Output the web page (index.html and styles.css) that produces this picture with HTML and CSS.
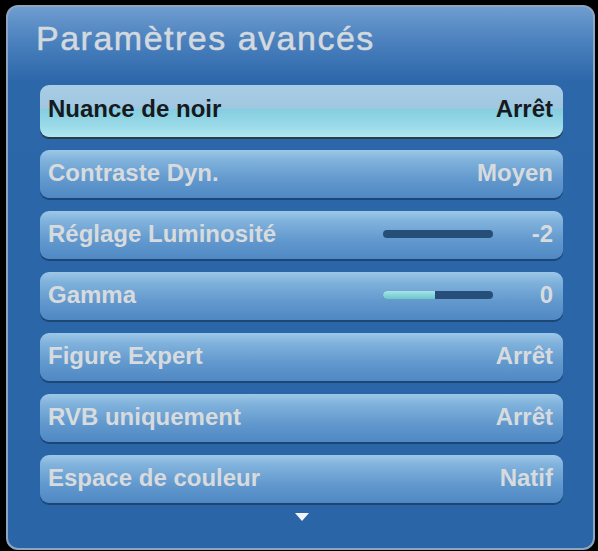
FILE: index.html
```html
<!DOCTYPE html>
<html lang="fr">
<head>
    <meta charset="UTF-8">
    <meta name="viewport" content="width=device-width, initial-scale=1.0">
    <title>Paramètres avancés</title>
    <link rel="stylesheet" href="styles.css">
</head>
<body>
    <div class="panel">
        <h1 class="title">Paramètres avancés</h1>

        <!-- Menu rows -->
        <ul class="menu">
            <li class="item selected">
                <span class="label">Nuance de noir</span>
                <span class="value">Arrêt</span>
            </li>
            <li class="item">
                <span class="label">Contraste Dyn.</span>
                <span class="value">Moyen</span>
            </li>
            <li class="item">
                <span class="label">Réglage Luminosité</span>
                <span class="slider"><span class="fill" style="width: 0%"></span></span>
                <span class="value">-2</span>
            </li>
            <li class="item">
                <span class="label">Gamma</span>
                <span class="slider"><span class="fill" style="width: 47%"></span></span>
                <span class="value">0</span>
            </li>
            <li class="item">
                <span class="label">Figure Expert</span>
                <span class="value">Arrêt</span>
            </li>
            <li class="item">
                <span class="label">RVB uniquement</span>
                <span class="value">Arrêt</span>
            </li>
            <li class="item">
                <span class="label">Espace de couleur</span>
                <span class="value">Natif</span>
            </li>
        </ul>

        <!-- More items below -->
        <div class="more">
            <svg width="14" height="8" viewBox="0 0 14 8"><polygon points="0,0 14,0 7,8" fill="#f2f6fa"/></svg>
        </div>
    </div>
</body>
</html>
```

FILE: styles.css
```css
/* General styles */
body {
    font-family: "Liberation Sans", Arial, sans-serif;
    margin: 0;
    padding: 0;
    width: 598px;
    height: 551px;
    overflow: hidden;
    background-color: #000000;
}

/* Main panel */
.panel {
    box-sizing: border-box;
    width: 589px;
    height: 545px;
    margin: 5px 0 0 6px;
    border: 2px solid #8ea5bf;
    border-radius: 12px;
    background: linear-gradient(to bottom, #6e9dd0 0px, #4a80bd 35px, #2c67aa 75px, #2a65a8 100%);
    display: flex;
    flex-direction: column;
}

.title {
    margin: 0;
    padding: 12px 0 0 28px;
    height: 64px;
    box-sizing: border-box;
    font-size: 34px;
    font-weight: normal;
    letter-spacing: 1.5px;
    line-height: 39px;
    color: #d2d9df;
    -webkit-text-stroke: 0.5px #d2d9df;
}

/* Menu rows */
.menu {
    list-style-type: none;
    margin: 14px 0 0 32px;
    padding: 0;
    width: 523px;
    display: flex;
    flex-direction: column;
    gap: 13px;
}

.item {
    box-sizing: border-box;
    height: 48px;
    padding: 0 10px 3px 8px;
    display: flex;
    align-items: center;
    border-radius: 9px;
    background: linear-gradient(to bottom, #9dc8e7 0px, #80b2dc 10px, #6198cd 30px, #4f88c4 100%);
    box-shadow: 0 2px 0 #1d4675;
    font-size: 24px;
    font-weight: bold;
    color: #d8dbdd;
}

.item.selected {
    height: 52px;
    padding-bottom: 4px;
    background: linear-gradient(to bottom, #a9cde6 0%, #a0c6e0 45%, #84cde0 47%, #9cdbe9 80%, #b2e6ef 100%);
    box-shadow: 0 2px 0 #2a3a48;
    color: #161a1e;
}

.label {
    flex: 1;
}

/* Slider bars */
.slider {
    width: 110px;
    height: 8px;
    border-radius: 4px;
    background-color: #274d79;
    overflow: hidden;
}

.fill {
    display: block;
    height: 100%;
    background: linear-gradient(to bottom, #a6e4e6, #6cc6cc);
}

.slider + .value {
    width: 60px;
    text-align: right;
}

/* Down arrow */
.more {
    display: flex;
    justify-content: center;
    margin-top: 10px;
    padding-left: 2px;
}
```
